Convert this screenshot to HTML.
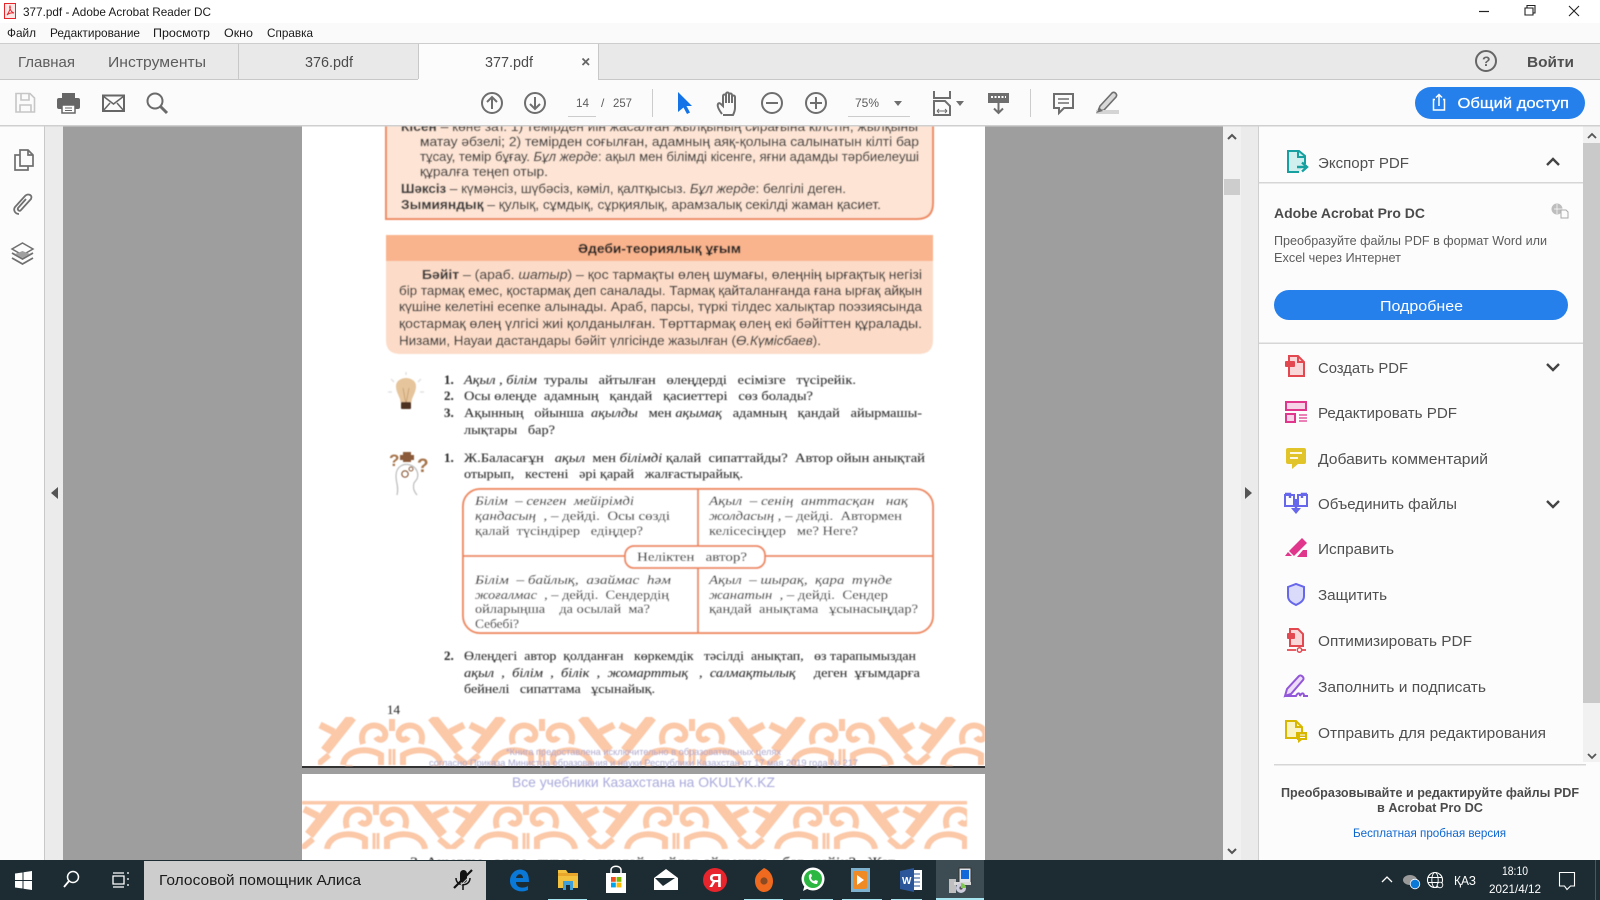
<!DOCTYPE html>
<html lang="ru">
<head>
<meta charset="utf-8">
<title>377.pdf - Adobe Acrobat Reader DC</title>
<style>
html,body{margin:0;padding:0;width:1600px;height:900px;overflow:hidden;background:#9e9e9e}
svg{display:block}
text{font-family:"Liberation Sans","DejaVu Sans","Noto Sans CJK SC",sans-serif;white-space:pre}
.ui{fill:#4b4b4b}
.p{font-size:13px;fill:#3a3a3a;stroke:#3a3a3a;stroke-width:.15}
.s{font-family:"Liberation Serif","DejaVu Serif","Noto Serif CJK SC",serif;font-size:13px;fill:#2e2e2e;stroke:#2e2e2e;stroke-width:.08}
.row{font-size:15px;fill:#505050}
.i{stroke:#6e6e6e;stroke-width:2;fill:none}
.w{fill:#fff}
</style>
</head>
<body>
<svg xmlns="http://www.w3.org/2000/svg" width="1600" height="900" viewBox="0 0 1600 900">
<defs>
<filter id="b" x="0" y="0" width="100%" height="100%"><feGaussianBlur stdDeviation="0.4"/></filter>
<pattern id="orn" patternUnits="userSpaceOnUse" width="150" height="48" x="317" y="717">
<g fill="none" stroke="#fbc8a8">
<path d="M35,0 L8,34" stroke-width="10"/>
<path d="M115,0 L142,34" stroke-width="10"/>
<path d="M3,8 L17,15" stroke-width="7"/>
<path d="M147,8 L133,15" stroke-width="7"/>
<path d="M0,48 L12,38" stroke-width="6"/>
<path d="M150,48 L138,38" stroke-width="6"/>
<path d="M26,48 C28,33 50,29 64,38 L64,48" stroke-width="6"/>
<path d="M124,48 C122,33 100,29 86,38 L86,48" stroke-width="6"/>
<path d="M46,27 C40,8 62,3 68,15 C70,23 62,25 59,20" stroke-width="6"/>
<path d="M104,27 C110,8 88,3 82,15 C80,23 88,25 91,20" stroke-width="6"/>
<path d="M75,2 V14" stroke-width="6"/>
<path d="M73,48 V32 M77,48 V32" stroke-width="3"/>
</g>
</pattern>
<pattern id="orn2" patternUnits="userSpaceOnUse" width="150" height="48" x="301" y="801">
<g fill="none" stroke="#fbc8a8">
<path d="M0,1 H150" stroke-width="5"/>
<path d="M35,0 L8,34" stroke-width="10"/>
<path d="M115,0 L142,34" stroke-width="10"/>
<path d="M3,8 L17,15" stroke-width="7"/>
<path d="M147,8 L133,15" stroke-width="7"/>
<path d="M0,48 L12,38" stroke-width="6"/>
<path d="M150,48 L138,38" stroke-width="6"/>
<path d="M26,48 C28,33 50,29 64,38 L64,48" stroke-width="6"/>
<path d="M124,48 C122,33 100,29 86,38 L86,48" stroke-width="6"/>
<path d="M46,27 C40,8 62,3 68,15 C70,23 62,25 59,20" stroke-width="6"/>
<path d="M104,27 C110,8 88,3 82,15 C80,23 88,25 91,20" stroke-width="6"/>
<path d="M75,2 V14" stroke-width="6"/>
<path d="M73,48 V32 M77,48 V32" stroke-width="3"/>
</g>
</pattern>
</defs>

<!-- doc area -->
<rect x="0" y="126" width="1600" height="774" fill="#9e9e9e"/>
<rect x="302" y="120" width="683" height="647" fill="#fff"/>
<rect x="302" y="766" width="683" height="2" fill="#333"/>
<rect x="302" y="774" width="683" height="90" fill="#fff"/>

<g filter="url(#b)">
<!-- box 1 -->
<path d="M386,110 V219 H917 Q933,219 933,203 V110 Z" fill="#fde4d4" stroke="#ee8b62" stroke-width="2"/>
<text class="p" x="401" y="131" textLength="517" lengthAdjust="spacingAndGlyphs"><tspan font-weight="bold">Кісен</tspan> – көне зат. 1) темірден иін жасалған жылқының сирағына кілстін, жылқыны</text>
<text class="p" x="420" y="146" textLength="499" lengthAdjust="spacingAndGlyphs">матау әбзелі; 2) темірден соғылған, адамның аяқ-қолына салынатын кілті бар</text>
<text class="p" x="420" y="161" textLength="499" lengthAdjust="spacingAndGlyphs">тұсау, темір бұғау. <tspan font-style="italic">Бұл жерде</tspan>: ақыл мен білімді кісенге, яғни адамды тәрбиелеуші</text>
<text class="p" x="420" y="176" textLength="128" lengthAdjust="spacingAndGlyphs">құралға теңеп отыр.</text>
<text class="p" x="401" y="193" textLength="445" lengthAdjust="spacingAndGlyphs"><tspan font-weight="bold">Шәксіз</tspan> – күмәнсіз, шүбәсіз, кәміл, қалтқысыз. <tspan font-style="italic">Бұл жерде</tspan>: белгілі деген.</text>
<text class="p" x="401" y="209" textLength="480" lengthAdjust="spacingAndGlyphs"><tspan font-weight="bold">Зымияндық</tspan> – қулық, сұмдық, сұрқиялық, арамзалық секілді жаман қасиет.</text>
<!-- box 2 -->
<path d="M386,261 H933 V340 Q933,354 919,354 H400 Q386,354 386,340 Z" fill="#fcdcc8"/>
<rect x="386" y="235" width="547" height="26" fill="#f9b48d"/>
<text class="p" font-weight="bold" x="578" y="253" textLength="163" lengthAdjust="spacingAndGlyphs" style="fill:#222">Әдеби-теориялық ұғым</text>
<text class="p" x="422" y="279" textLength="500" lengthAdjust="spacingAndGlyphs"><tspan font-weight="bold">Бәйіт</tspan> – (араб. <tspan font-style="italic">шатыр</tspan>) – қос тармақты өлең шумағы, өлеңнің ырғақтық негізі</text>
<text class="p" x="399" y="295" textLength="523" lengthAdjust="spacingAndGlyphs">бір тармақ емес, қостармақ деп саналады. Тармақ қайталанғанда ғана ырғақ айқын</text>
<text class="p" x="399" y="311" textLength="523" lengthAdjust="spacingAndGlyphs">күшіне келетіні есепке алынады. Араб, парсы, түркі тілдес халықтар поэзиясында</text>
<text class="p" x="399" y="328" textLength="523" lengthAdjust="spacingAndGlyphs">қостармақ өлең үлгісі жиі қолданылған. Төрттармақ өлең екі бәйіттен құралады.</text>
<text class="p" x="399" y="345" textLength="422" lengthAdjust="spacingAndGlyphs">Низами, Науаи дастандары бәйіт үлгісінде жазылған (<tspan font-style="italic">Ө.Күмісбаев</tspan>).</text>

<!-- bulb -->
<g>
<path d="M400,399 C398,394 396,391 396,386 C396,381 401,378 406,378 C411,378 416,381 416,386 C416,391 414,394 412,399 L411,404 H401Z" fill="#e6c59c"/>
<path d="M403,388 L406,404 M409,388 L406,404" stroke="#c49a6c" stroke-width=".8" fill="none"/>
<rect x="401" y="402" width="10" height="7" rx="1" fill="#4d3324"/>
<path d="M391,379 L394,382 M406,372 V375 M421,379 L418,382 M388,392 H392 M420,392 H424" stroke="#e2e2e2" stroke-width="1.5"/>
</g>
<!-- head -->
<g>
<text x="389" y="466" font-size="17" font-weight="bold" style="fill:#a5734a">?</text>
<text x="417" y="472" font-size="19" font-weight="bold" style="fill:#a5734a">?</text>
<rect x="403" y="452" width="8" height="10" fill="#8a5a3a"/><rect x="400" y="455" width="14" height="5" fill="#8a5a3a"/>
<path d="M397,495 C399,487 396,483 396,476 C396,466 404,463 410,465 C417,467 419,474 417,479 L414,483 C413,487 413,490 417,495" fill="none" stroke="#bbb" stroke-width="1.2"/>
<circle cx="405" cy="474" r="3.2" fill="none" stroke="#8a5a3a" stroke-width="1.2"/>
<circle cx="411" cy="469" r="2" fill="none" stroke="#8a5a3a" stroke-width="1"/>
</g>

<!-- questions -->
<text class="s" font-weight="bold" x="444" y="384">1.</text>
<text class="s" x="464" y="384" textLength="392" lengthAdjust="spacingAndGlyphs"><tspan font-style="italic">Ақыл , білім</tspan>  туралы   айтылған   өлеңдерді   есімізге   түсірейік.</text>
<text class="s" font-weight="bold" x="444" y="400">2.</text>
<text class="s" x="464" y="400" textLength="349" lengthAdjust="spacingAndGlyphs">Осы өлеңде  адамның   қандай   қасиеттері   сөз болады?</text>
<text class="s" font-weight="bold" x="444" y="417">3.</text>
<text class="s" x="464" y="417" textLength="458" lengthAdjust="spacingAndGlyphs">Ақынның   ойынша  <tspan font-style="italic">ақылды</tspan>   мен <tspan font-style="italic">ақымақ</tspan>   адамның   қандай   айырмашы-</text>
<text class="s" x="464" y="434" textLength="91" lengthAdjust="spacingAndGlyphs">лықтары   бар?</text>
<text class="s" font-weight="bold" x="444" y="462">1.</text>
<text class="s" x="464" y="462" textLength="461" lengthAdjust="spacingAndGlyphs">Ж.Баласағұн   <tspan font-style="italic">ақыл</tspan>  мен <tspan font-style="italic">білімді</tspan> қалай  сипаттайды?  Автор ойын анықтай</text>
<text class="s" x="464" y="478" textLength="279" lengthAdjust="spacingAndGlyphs">отырып,   кестені   әрі қарай   жалғастырайық.</text>

<!-- table -->
<rect x="463" y="489" width="470" height="144" rx="17" fill="#fff" stroke="#ee8b62" stroke-width="2"/>
<path d="M698,489 V633 M463,556 H933" stroke="#ee8b62" stroke-width="2"/>
<rect x="625" y="546" width="140" height="22" rx="9" fill="#fff" stroke="#ee8b62" stroke-width="2"/>
<text class="s" x="637" y="561" font-size="14" textLength="110" lengthAdjust="spacingAndGlyphs">Неліктен   автор?</text>

<text class="s" x="475" y="505" textLength="159" lengthAdjust="spacingAndGlyphs" font-style="italic">Білім  – сенген  мейірімді</text>
<text class="s" x="475" y="520" textLength="195" lengthAdjust="spacingAndGlyphs"><tspan font-style="italic">қандасың</tspan>  , – дейді.  Осы сөзді</text>
<text class="s" x="475" y="535" textLength="168" lengthAdjust="spacingAndGlyphs">қалай  түсіндірер   едіңдер?</text>
<text class="s" x="709" y="505" textLength="199" lengthAdjust="spacingAndGlyphs" font-style="italic">Ақыл  – сенің  анттасқан   нақ</text>
<text class="s" x="709" y="520" textLength="193" lengthAdjust="spacingAndGlyphs"><tspan font-style="italic">жолдасың</tspan> , – дейді.  Автормен</text>
<text class="s" x="709" y="535" textLength="149" lengthAdjust="spacingAndGlyphs">келісесіңдер   ме? Неге?</text>
<text class="s" x="475" y="584" textLength="196" lengthAdjust="spacingAndGlyphs" font-style="italic">Білім  – байлық,  азаймас  һәм</text>
<text class="s" x="475" y="599" textLength="194" lengthAdjust="spacingAndGlyphs"><tspan font-style="italic">жоғалмас</tspan>  , – дейді.  Сендердің</text>
<text class="s" x="475" y="613" textLength="175" lengthAdjust="spacingAndGlyphs">ойларыңша    да осылай  ма?</text>
<text class="s" x="475" y="628" textLength="44" lengthAdjust="spacingAndGlyphs">Себебі?</text>
<text class="s" x="709" y="584" textLength="183" lengthAdjust="spacingAndGlyphs" font-style="italic">Ақыл  – шырақ,  қара  түнде</text>
<text class="s" x="709" y="599" textLength="179" lengthAdjust="spacingAndGlyphs"><tspan font-style="italic">жанатын</tspan>  , – дейді.  Сендер</text>
<text class="s" x="709" y="613" textLength="209" lengthAdjust="spacingAndGlyphs">қандай  анықтама   ұсынасыңдар?</text>

<text class="s" font-weight="bold" x="444" y="660">2.</text>
<text class="s" x="464" y="660" textLength="452" lengthAdjust="spacingAndGlyphs">Өлеңдегі  автор  қолданған   көркемдік   тәсілді  анықтап,   өз тарапымыздан</text>
<text class="s" x="464" y="677" textLength="456" lengthAdjust="spacingAndGlyphs" ><tspan font-style="italic">ақыл  ,  білім  ,  білік  ,  жомарттық   ,  салмақтылық</tspan>     деген  ұғымдарға</text>
<text class="s" x="464" y="693" textLength="191" lengthAdjust="spacingAndGlyphs">бейнелі   сипаттама   ұсынайық.</text>
<text class="s" x="387" y="714">14</text>

<!-- ornaments -->
<rect x="318" y="717" width="667" height="49" fill="url(#orn)"/>
<rect x="302" y="801" width="665" height="48" fill="url(#orn2)"/>
<text x="506" y="755" font-size="9.5" textLength="275" lengthAdjust="spacingAndGlyphs" style="fill:#b0a8cc">*Книга предоставлена исключительно в образовательных целях</text>
<text x="429" y="766" font-size="9.5" textLength="429" lengthAdjust="spacingAndGlyphs" style="fill:#a9a8d0">согласно Приказа Министра образования и науки Республики Казахстан от 17 мая 2019 года № 217</text>
<text x="512" y="787" font-size="14" textLength="263" lengthAdjust="spacingAndGlyphs" style="fill:#a9a9dc">Все учебники Казахстана на OKULYK.KZ</text>
<text class="s" x="410" y="866" textLength="485" lengthAdjust="spacingAndGlyphs">3. Ақылды   адам   туралы   қандай    ойлар айтылған    бар  кейін?   Жат</text>
</g>

<!-- chrome: left rail -->
<rect x="0" y="126" width="44" height="734" fill="#fcfcfc"/>
<rect x="44" y="126" width="1" height="734" fill="#c8c8c8"/>
<rect x="45" y="126" width="18" height="734" fill="#ebebeb"/>
<path d="M58,487 L51,493 L58,499Z" fill="#555"/>
<path d="M20,150 H28 L33,155 V166 H20Z M28,150 V155 H33 M20,155 H15 V170 H28 V166" fill="none" stroke="#707070" stroke-width="1.7"/>
<path d="M19,214 C15,214 13,210 15,207 L25,196 C28,193 33,195 31,199 L21,210 C20,212 17,210 18,208 L26,199" fill="none" stroke="#707070" stroke-width="1.8"/>
<path d="M22.5,243 L33,249 L22.5,255 L12,249Z" fill="#fcfcfc" stroke="#707070" stroke-width="1.5"/>
<path d="M12,253 L22.5,259 L33,253 M12,258 L22.5,264 L33,258" fill="none" stroke="#707070" stroke-width="1.8"/>
<path d="M15,254 L22.5,258 L30,254 L22.5,251Z" fill="#a0a0a0"/>

<!-- center scrollbar -->
<rect x="1223" y="126" width="18" height="734" fill="#f1f1f1"/>
<rect x="1241" y="126" width="17" height="734" fill="#ebebeb"/>
<rect x="1258" y="126" width="1" height="734" fill="#cfcfcf"/>
<rect x="1224" y="179" width="16" height="16" fill="#cdcdcd"/>
<path d="M1228,139 L1232,135 L1236,139" fill="none" stroke="#555" stroke-width="2"/>
<path d="M1228,849 L1232,853 L1236,849" fill="none" stroke="#555" stroke-width="2"/>
<path d="M1245,487 L1252,493 L1245,499Z" fill="#555"/>

<!-- right panel -->
<rect x="1259" y="126" width="341" height="734" fill="#fcfcfc"/>
<rect x="1583" y="126" width="17" height="636" fill="#f1f1f1"/>
<rect x="1583" y="143" width="17" height="560" fill="#c9c9c9"/>
<path d="M1588,138 L1592,134 L1596,138" fill="none" stroke="#555" stroke-width="1.8"/>
<path d="M1588,754 L1592,758 L1596,754" fill="none" stroke="#555" stroke-width="1.8"/>
<rect x="1259" y="182" width="324" height="1.5" fill="#d6d6d6"/>
<rect x="1259" y="342.5" width="324" height="1.5" fill="#d6d6d6"/>
<rect x="1274" y="764" width="312" height="1.5" fill="#d6d6d6"/>

<!-- export row -->
<path d="M1305,164 V156 L1299,151 H1288 V172 H1299" fill="#cfeeee" stroke="#16a0a0" stroke-width="2"/>
<path d="M1298,151 V157 H1305" fill="none" stroke="#16a0a0" stroke-width="2"/>
<path d="M1297,167 H1306 M1302,162.5 L1307,167 L1302,171.5" fill="none" stroke="#16a0a0" stroke-width="2.4"/>
<text class="row" x="1318" y="168" textLength="91" lengthAdjust="spacingAndGlyphs">Экспорт PDF</text>
<path d="M1547,165 L1553,159 L1559,165" fill="none" stroke="#444" stroke-width="2.4"/>

<text x="1274" y="218" font-size="13.5" font-weight="bold" textLength="151" lengthAdjust="spacingAndGlyphs" style="fill:#4b4b4b">Adobe Acrobat Pro DC</text>
<circle cx="1557" cy="209" r="5.5" fill="#bdbdbd"/><path d="M1554,209 H1563 M1557,204 V214" stroke="#fcfcfc" stroke-width=".7"/><path d="M1561,210 H1566 L1568,212 V218 H1561Z" fill="#fcfcfc" stroke="#aaa"/>
<text x="1274" y="245" font-size="12.5" textLength="273" lengthAdjust="spacingAndGlyphs" style="fill:#5c5c5c">Преобразуйте файлы PDF в формат Word или</text>
<text x="1274" y="262" font-size="12.5" textLength="127" lengthAdjust="spacingAndGlyphs" style="fill:#5c5c5c">Excel через Интернет</text>
<rect x="1274" y="290" width="294" height="30" rx="15" fill="#2680eb"/>
<text x="1380" y="311" font-size="15" textLength="83" lengthAdjust="spacingAndGlyphs" class="w">Подробнее</text>

<!-- create -->
<path d="M1289,356 H1298 L1304,362 V376 H1289Z" fill="#f9d6d8" stroke="#e34850" stroke-width="2"/>
<path d="M1298,356 V362 H1304" fill="none" stroke="#e34850" stroke-width="2"/>
<rect x="1285" y="361" width="10" height="6" rx="1" fill="#e34850"/>
<text class="row" x="1318" y="373" textLength="90" lengthAdjust="spacingAndGlyphs">Создать PDF</text>
<path d="M1547,364 L1553,370 L1559,364" fill="none" stroke="#444" stroke-width="2.4"/>

<!-- edit -->
<rect x="1286" y="402" width="20" height="8" fill="#f6d3e6" stroke="#e0368c" stroke-width="2"/>
<rect x="1286" y="414" width="9" height="8" fill="#f6d3e6" stroke="#e0368c" stroke-width="2"/>
<path d="M1299,415 H1307 M1299,418 H1307 M1299,421 H1307" stroke="#e0368c" stroke-width="1.2"/>
<text class="row" x="1318" y="418" textLength="139" lengthAdjust="spacingAndGlyphs">Редактировать PDF</text>

<!-- comment -->
<path d="M1288,448 H1304 Q1306,448 1306,450 V462 Q1306,464 1304,464 H1298 L1292,469 V464 H1288 Q1286,464 1286,462 V450 Q1286,448 1288,448Z" fill="#e1c429"/>
<path d="M1290,453 H1302 M1290,458 H1298" stroke="#fff" stroke-width="1.8"/>
<text class="row" x="1318" y="464" textLength="170" lengthAdjust="spacingAndGlyphs">Добавить комментарий</text>

<!-- combine -->
<path d="M1285,495 H1294 V506 H1285Z M1298,495 H1307 V506 H1298Z" fill="#fcfcfc" stroke="#6767ec" stroke-width="2"/>
<path d="M1285,494 H1290 V498 M1307,494 H1302 V498" stroke="#6767ec" stroke-width="2.4" fill="none"/>
<path d="M1296,499 V509" stroke="#6767ec" stroke-width="2.4"/>
<path d="M1291,508 H1301 L1296,514Z" fill="#6767ec"/>
<text class="row" x="1318" y="509" textLength="139" lengthAdjust="spacingAndGlyphs">Объединить файлы</text>
<path d="M1547,501 L1553,507 L1559,501" fill="none" stroke="#444" stroke-width="2.4"/>

<!-- fix -->
<path d="M1289,551 L1302,538 L1307,543 L1294,556Z" fill="#e0368c"/>
<path d="M1288,552 L1292,556 H1285Z" fill="#e0368c"/>
<path d="M1297,557 L1303,550 H1307 V557Z" fill="#e0368c"/>
<text class="row" x="1318" y="554" textLength="76" lengthAdjust="spacingAndGlyphs">Исправить</text>

<!-- shield -->
<path d="M1288,587 L1296,584 L1304,587 V596 C1304,601 1300,603 1296,605 C1292,603 1288,601 1288,596Z" fill="#dadafa" stroke="#6767ec" stroke-width="2"/>
<text class="row" x="1318" y="600" textLength="69" lengthAdjust="spacingAndGlyphs">Защитить</text>

<!-- optimize -->
<path d="M1290,629 H1298 L1303,634 V646 H1290Z" fill="#f9d6d8" stroke="#e34850" stroke-width="2"/>
<rect x="1287" y="633" width="8" height="6" rx="1" fill="#e34850"/>
<path d="M1287,650 H1296 M1302,650 H1306" stroke="#e34850" stroke-width="1.8"/>
<circle cx="1299.5" cy="650" r="2.2" fill="none" stroke="#e34850" stroke-width="1.5"/>
<text class="row" x="1318" y="646" textLength="154" lengthAdjust="spacingAndGlyphs">Оптимизировать PDF</text>

<!-- sign -->
<path d="M1285,696 L1287,689 L1299,676 C1301,674 1305,678 1303,680 L1291,694Z" fill="#ecdcf9" stroke="#9256d9" stroke-width="2"/>
<path d="M1285,696 H1296 C1298,692 1300,693 1300,696 C1302,692 1304,693 1304,696 H1308" fill="none" stroke="#9256d9" stroke-width="2"/>
<text class="row" x="1318" y="692" textLength="168" lengthAdjust="spacingAndGlyphs">Заполнить и подписать</text>

<!-- send -->
<path d="M1286,721 H1296 L1302,727 V733 H1297 V738 H1286Z" fill="#faf3c6" stroke="#d9b700" stroke-width="2"/>
<path d="M1296,721 V727 H1302" fill="none" stroke="#d9b700" stroke-width="2"/>
<path d="M1297,732 H1307 V740 H1302 L1298,743 V740 H1297Z" fill="#d9b700"/>
<path d="M1300,735 H1305 M1300,737.5 H1305" stroke="#fff" stroke-width="1"/>
<text class="row" x="1318" y="738" textLength="228" lengthAdjust="spacingAndGlyphs">Отправить для редактирования</text>

<text x="1281" y="797" font-size="12.5" font-weight="bold" textLength="298" lengthAdjust="spacingAndGlyphs" style="fill:#4b4b4b">Преобразовывайте и редактируйте файлы PDF</text>
<text x="1377" y="812" font-size="12.5" font-weight="bold" textLength="106" lengthAdjust="spacingAndGlyphs" style="fill:#4b4b4b">в Acrobat Pro DC</text>
<text x="1353" y="837" font-size="12" textLength="153" lengthAdjust="spacingAndGlyphs" style="fill:#0d66d0">Бесплатная пробная версия</text>

<!-- top chrome -->
<rect x="0" y="0" width="1600" height="23" fill="#fff"/>
<path d="M4.5,3.5 H15.5 V18.5 H4.5Z" fill="#fde8e8" stroke="#e5252a"/>
<path d="M7,15 C9,12 11,8 10,6 C9,8 11,12 14,13 C11,12.5 9,13 7,15Z" fill="none" stroke="#e5252a"/>
<text x="23" y="16" font-size="12" textLength="188" lengthAdjust="spacingAndGlyphs" style="fill:#1a1a1a">377.pdf - Adobe Acrobat Reader DC</text>
<path d="M1479,11.5 H1489" stroke="#222" stroke-width="1.2"/>
<path d="M1525,8 H1533 V15 H1525Z M1527,8 V5.5 H1535 V13 H1533" fill="none" stroke="#222" stroke-width="1.1"/>
<path d="M1569,6 L1579,16 M1579,6 L1569,16" stroke="#222" stroke-width="1.1"/>

<rect x="0" y="23" width="1600" height="20" fill="#fafafa"/>
<rect x="0" y="43" width="1600" height="1" fill="#cdcdcd"/>
<g font-size="12" style="fill:#1a1a1a">
<text x="7" y="37" textLength="29" lengthAdjust="spacingAndGlyphs" style="fill:#1a1a1a">Файл</text>
<text x="50" y="37" textLength="90" lengthAdjust="spacingAndGlyphs" style="fill:#1a1a1a">Редактирование</text>
<text x="153" y="37" textLength="57" lengthAdjust="spacingAndGlyphs" style="fill:#1a1a1a">Просмотр</text>
<text x="224" y="37" textLength="29" lengthAdjust="spacingAndGlyphs" style="fill:#1a1a1a">Окно</text>
<text x="267" y="37" textLength="46" lengthAdjust="spacingAndGlyphs" style="fill:#1a1a1a">Справка</text>
</g>

<rect x="0" y="44" width="1600" height="35" fill="#e9e9e9"/>
<rect x="0" y="79" width="1600" height="1" fill="#c8c8c8"/>
<rect x="418" y="44" width="180" height="36" fill="#fcfcfc"/>
<rect x="238" y="44" width="1" height="35" fill="#c8c8c8"/>
<rect x="418" y="44" width="1" height="35" fill="#c8c8c8"/>
<rect x="598" y="44" width="1" height="35" fill="#c8c8c8"/>
<text x="18" y="67" font-size="15" textLength="57" lengthAdjust="spacingAndGlyphs" style="fill:#5c5c5c">Главная</text>
<text x="108" y="67" font-size="15" textLength="98" lengthAdjust="spacingAndGlyphs" style="fill:#5c5c5c">Инструменты</text>
<text x="305" y="67" font-size="15" textLength="48" lengthAdjust="spacingAndGlyphs" style="fill:#4b4b4b">376.pdf</text>
<text x="485" y="67" font-size="15" textLength="48" lengthAdjust="spacingAndGlyphs" style="fill:#4b4b4b">377.pdf</text>
<path d="M582.5,58.5 L589,65 M589,58.5 L582.5,65" stroke="#666" stroke-width="1.8"/>
<circle cx="1486" cy="61" r="10" fill="none" stroke="#666" stroke-width="2"/>
<text x="1482" y="66" font-size="14" font-weight="bold" style="fill:#666">?</text>
<text x="1527" y="67" font-size="15" font-weight="bold" textLength="47" lengthAdjust="spacingAndGlyphs" style="fill:#505050">Войти</text>

<rect x="0" y="80" width="1600" height="45" fill="#fbfbfb"/>
<rect x="0" y="125" width="1600" height="1.5" fill="#cfcfcf"/>

<!-- toolbar left -->
<path d="M16,93.5 H30 L34.5,98 V112 H16Z M21,93.5 V100 H29 V93.5 M20,112 V105 H31 V112" fill="none" stroke="#c6c6c6" stroke-width="1.6"/>
<rect x="62" y="93" width="13" height="6" fill="#666"/>
<rect x="57" y="98" width="23" height="11" rx="2" fill="#666"/>
<rect x="62" y="105" width="13" height="8" fill="#fff" stroke="#666" stroke-width="1.5"/>
<path d="M65,108 H72 M65,110.5 H72" stroke="#666"/>
<rect x="103" y="95.5" width="21" height="15.5" fill="none" stroke="#666" stroke-width="2"/>
<path d="M103,96 L113.5,104 L124,96 M103,111 L110,103 M124,111 L117,103" fill="none" stroke="#666" stroke-width="1.5"/>
<circle cx="155" cy="101" r="7.5" fill="none" stroke="#6a6a6a" stroke-width="2"/>
<path d="M160.5,106.5 L167,113" stroke="#6a6a6a" stroke-width="3"/>

<circle class="i" cx="492" cy="103" r="10"/>
<path class="i" d="M492,109 V97 M487,102 L492,97 L497,102" stroke-width="2.4"/>
<circle class="i" cx="535" cy="103" r="10"/>
<path class="i" d="M535,97 V109 M530,104 L535,109 L540,104" stroke-width="2.4"/>
<text x="576" y="107" font-size="12" textLength="13" lengthAdjust="spacingAndGlyphs" style="fill:#5c5c5c">14</text>
<text x="601" y="107" font-size="12" style="fill:#5c5c5c">/</text>
<text x="613" y="107" font-size="12" textLength="19" lengthAdjust="spacingAndGlyphs" style="fill:#5c5c5c">257</text>
<rect x="568" y="116" width="28" height="1" fill="#ccc"/>
<rect x="652" y="89" width="1" height="28" fill="#ccc"/>

<path d="M678,92 L692,106 H686.5 L690,112.5 L687,114 L683.5,107.5 L678,112Z" fill="#1473e6"/>
<path d="M722,114 C719,110 717,106 718,104 C719,102 721,104 723,106 V96 C723,94 726,94 726,96 V94 C726,92 729,92 729,94 V95 C729,93 732,93 732,95 V97 C732,95 735,95 735,97 V108 C735,111 734,113 733,115 H723" class="i" stroke-width="1.7"/>
<path d="M726,96 V103 M729,95 V103 M732,96 V103" class="i" stroke-width="1.2"/>
<circle class="i" cx="772" cy="103" r="10"/>
<path class="i" d="M766,103 H778"/>
<circle class="i" cx="816" cy="103" r="10"/>
<path class="i" d="M810,103 H822 M816,97 V109"/>
<text x="855" y="107" font-size="12" textLength="24" lengthAdjust="spacingAndGlyphs" style="fill:#5c5c5c">75%</text>
<path d="M894,101 H902 L898,106Z" fill="#6e6e6e"/>
<rect x="848" y="116" width="62" height="1" fill="#ccc"/>

<path class="i" d="M934,91 V98 H950 V91"/>
<path class="i" d="M934,115 V101 H945 L950,106 V115Z" stroke-width="1.6"/>
<path d="M937,111 H947 M937,111 L939,109 M937,111 L939,113 M947,111 L945,109 M947,111 L945,113" stroke="#6e6e6e" fill="none"/>
<path d="M956,101 H964 L960,106Z" fill="#6e6e6e"/>
<rect x="988" y="93" width="21" height="10" fill="#6e6e6e"/>
<path d="M991,97 H1006" stroke="#fff" stroke-width="2" stroke-dasharray="2 1.5"/>
<path class="i" d="M998.5,103 V113 M994,108.5 L998.5,113 L1003,108.5"/>
<rect x="1030" y="89" width="1" height="28" fill="#ccc"/>

<path class="i" d="M1054,94 H1073 V108 H1064 L1059,113 V108 H1054Z" stroke-width="1.9" fill="#e4e4e4"/>
<path d="M1058,99 H1069 M1058,103 H1069" stroke="#6e6e6e" stroke-width="1.4"/>
<path d="M1100,106 L1112,93 C1114,91 1118,94 1116,97 L1104,110 L1098,111Z" fill="#d8d8d8" stroke="#6e6e6e" stroke-width="1.6"/>
<rect x="1096" y="110" width="23" height="4" fill="#d4d4d4"/>
<path d="M1096,113 L1100,108 L1103,111Z" fill="#6e6e6e"/>

<!-- share -->
<rect x="1415" y="87" width="170" height="32" rx="16" fill="#2680eb"/>
<path d="M1435,99.5 H1433.5 V110 H1444.5 V99.5 H1443 M1439,106 V94.5 M1436,97.5 L1439,94.5 L1442,97.5" fill="none" stroke="#fff" stroke-width="1.5"/>
<text x="1457.5" y="108" font-size="15" textLength="111.5" lengthAdjust="spacingAndGlyphs" class="w" stroke="#fff" stroke-width="0.25">Общий доступ</text>

<!-- taskbar -->
<rect x="0" y="860" width="1600" height="40" fill="#1c2c32"/>
<path d="M15,873.5 L22.5,872.5 V880 H15Z M23.5,872.3 L32,871 V880 H23.5Z M15,881 H22.5 V888.5 L15,887.5Z M23.5,881 H32 V890 L23.5,888.7Z" fill="#fff"/>
<circle cx="73" cy="877" r="5.5" fill="none" stroke="#fff" stroke-width="1.5"/>
<path d="M69,881 L64,887" stroke="#fff" stroke-width="1.8"/>
<path d="M113,873 H124 M113,887 H124 M113,876 H124 V884 H113Z M127,873 H129 M127,879 H129 M127,885 H129" fill="none" stroke="#fff" stroke-width="1.3"/>
<rect x="144" y="861" width="342" height="39" fill="#cdcdcd"/>
<text x="159" y="885" font-size="15" textLength="202" lengthAdjust="spacingAndGlyphs" style="fill:#1a1a1a">Голосовой помощник Алиса</text>
<rect x="460" y="870" width="7" height="13" rx="3.5" fill="#111"/>
<path d="M456,878 C456,887 470,887 470,878 M463,885 V890" fill="none" stroke="#111" stroke-width="1.5"/>
<path d="M454,888 L472,870" stroke="#111" stroke-width="2.2"/>
<path d="M456,890 L474,872" stroke="#cdcdcd" stroke-width="1"/>

<!-- app underlines -->
<g fill="#a6e6f0">
<rect x="548" y="899" width="39" height="1"/><rect x="744" y="899" width="39" height="1"/>
<rect x="800" y="899" width="33" height="1"/><rect x="842" y="899" width="40" height="1"/>
<rect x="891" y="899" width="31" height="1"/>
</g>
<!-- edge -->
<path d="M510,881 C510,872 518,868 523,870 C528,871 529,877 529,882 H516 C516,888 523,889 528,886 V890 C519,894 510,889 510,881Z M516,878 H523 C523,873 517,873 516,878Z" fill="#0a78d7" fill-rule="evenodd"/>
<!-- explorer -->
<path d="M558,870 H566 L568,873 H578 V888 H558Z" fill="#f3c33f"/>
<rect x="558" y="873" width="20" height="3" fill="#e8a72a"/>
<rect x="563" y="881" width="10" height="9" fill="#3fa0d8"/>
<rect x="566" y="885" width="4" height="5" fill="#1c2c32"/>
<!-- store -->
<path d="M606,873 H626 V893 H606Z" fill="#fff"/>
<path d="M611,873 V870 C611,865 621,865 621,870 V873" fill="none" stroke="#fff" stroke-width="1.5"/>
<rect x="611" y="877" width="4.8" height="4.8" fill="#f25022"/><rect x="616.6" y="877" width="4.8" height="4.8" fill="#7fba00"/>
<rect x="611" y="882.6" width="4.8" height="4.8" fill="#00a4ef"/><rect x="616.6" y="882.6" width="4.8" height="4.8" fill="#ffb900"/>
<!-- mail -->
<path d="M654,878 L666,869 L678,878 V890 H654Z" fill="#fff"/>
<path d="M655,878 H675 L663,886Z" fill="#1c2c32"/>
<!-- yandex -->
<circle cx="715" cy="880" r="12" fill="#e8242c"/>
<text x="709" y="887" font-size="18" font-weight="bold" class="w">Я</text>
<!-- origin -->
<path d="M764,868 C769,870 773,875 773,881 C773,888 769,892 764,892 C759,892 755,887 755,881 C755,875 759,872 764,868Z" fill="#ef6a1f"/>
<circle cx="764" cy="881" r="3.6" fill="#8a4a24"/>
<!-- whatsapp -->
<circle cx="813" cy="879" r="11.5" fill="#fff"/>
<circle cx="813" cy="879" r="9" fill="#2bb741"/>
<path d="M803,891 L805,884 L809,888Z" fill="#fff"/>
<path d="M809,875 C808,880 812,884 817,884 L818,881 L815.5,880 L814,881 C812,880.5 811,879 811,877.5 L812,876 L811,873.5Z" fill="#fff"/>
<!-- media -->
<rect x="851" y="868" width="19" height="24" fill="#7fb2cf"/>
<rect x="853" y="871" width="14" height="18" rx="2" fill="#f08a24"/>
<path d="M857,875 L864,880 L857,885Z" fill="#fff"/>
<!-- word -->
<rect x="906" y="870" width="16" height="20" fill="#fff"/>
<path d="M909,874 H920 M909,878 H920 M909,882 H920 M909,886 H920" stroke="#2b579a"/>
<path d="M900,871 L914,868 V892 L900,889Z" fill="#2b579a"/>
<text x="902" y="884" font-size="10" font-weight="bold" class="w">W</text>
<!-- installer -->
<rect x="936" y="860" width="48" height="40" fill="#3d4c52"/>
<rect x="936" y="898" width="48" height="2" fill="#a6e6f0"/>
<rect x="959" y="868" width="12" height="15" fill="#dfe3ea" stroke="#333"/>
<rect x="961" y="870" width="8" height="9" fill="#1168d8"/>
<rect x="949" y="879" width="7" height="14" fill="#bfbfbf"/>
<rect x="954" y="882" width="17" height="3" fill="#d8d8d8"/>
<circle cx="961" cy="888" r="5" fill="#ccd"/><circle cx="961" cy="888" r="1.6" fill="#555"/>
<path d="M961,883 A5,5 0 0 1 966,888 L961,888Z" fill="#7ec850"/>

<!-- tray -->
<path d="M1382,882 L1387,877 L1392,882" fill="none" stroke="#fff" stroke-width="1.3"/>
<ellipse cx="1410" cy="880" rx="7" ry="5" fill="#9a9a9a"/>
<circle cx="1415" cy="884" r="4.8" fill="#0a78d7" stroke="#fff" stroke-width="0.8"/>
<circle cx="1435" cy="880" r="7.5" fill="none" stroke="#fff" stroke-width="1.1"/>
<ellipse cx="1435" cy="880" rx="3.2" ry="7.5" fill="none" stroke="#fff" stroke-width="0.9"/>
<path d="M1428,877.5 H1442 M1428,882.5 H1442" stroke="#fff" stroke-width="0.9"/>
<circle cx="1440" cy="885" r="2.8" fill="#1c2c32" stroke="#fff" stroke-width="0.9"/>
<text x="1454" y="885" font-size="13" textLength="22" lengthAdjust="spacingAndGlyphs" class="w">ҚАЗ</text>
<text x="1502" y="875" font-size="12" textLength="26" lengthAdjust="spacingAndGlyphs" class="w">18:10</text>
<text x="1489" y="893" font-size="12" textLength="52" lengthAdjust="spacingAndGlyphs" class="w">2021/4/12</text>
<path d="M1559.5,872.5 H1574.5 V886 H1570.5 L1567,889.5 L1564.5,886 H1559.5Z" fill="none" stroke="#fff" stroke-width="1.1"/>
<rect x="1595" y="860" width="1" height="40" fill="#4a585d"/>
</svg>
</body>
</html>
